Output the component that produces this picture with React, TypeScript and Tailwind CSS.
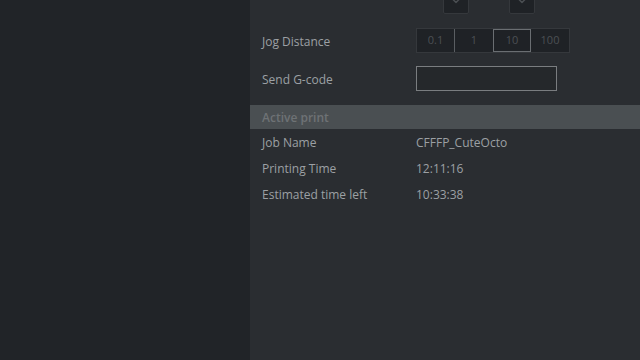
import React from "react";

function Chevron() {
  return (
    <svg width="12" height="12" viewBox="0 0 24 24" fill="none" stroke="#4a4e52" strokeWidth="3" strokeLinecap="round" strokeLinejoin="round">
      <path d="M6 9l6 6 6-6" />
    </svg>
  );
}

export default function App() {
  const font = { fontFamily: '"Open Sans", "Noto Sans", sans-serif' };
  const rows = [
    ["Job Name", "CFFFP_CuteOcto"],
    ["Printing Time", "12:11:16"],
    ["Estimated time left", "10:33:38"],
  ];
  return (
    <div className="flex h-[360px] w-[640px] overflow-hidden text-[12px] text-[#9ca0a4]" style={font}>
      <div className="w-[250px] shrink-0 bg-[#212428]" />
      <div className="flex flex-1 flex-col bg-[#2a2d31]">
        <div className="-mt-[12px] flex h-[26px] pl-[193px]">
          <div className="flex h-[26px] w-[26px] items-center justify-center rounded-[2px] border border-[#35383c] bg-[#1f2226]">
            <Chevron />
          </div>
          <div className="ml-[40px] flex h-[26px] w-[26px] items-center justify-center rounded-[2px] border border-[#35383c] bg-[#1f2226]">
            <Chevron />
          </div>
        </div>
        <div className="mt-[14px] flex h-[25px] items-center pl-[12px]">
          <div className="w-[154px] pt-[2px]">Jog Distance</div>
          <div className="flex h-[25px] border border-[#35383c] bg-[#1f2226] text-[11px] text-[#4c5054]">
            <div className="flex w-[38px] items-center justify-center border-r border-[#5a5e62]">0.1</div>
            <div className="flex w-[38px] items-center justify-center">1</div>
            <div className="flex w-[38px] items-center justify-center border border-[#6a6e72]">10</div>
            <div className="flex w-[38px] items-center justify-center">100</div>
          </div>
        </div>
        <div className="mt-[13px] flex h-[25px] items-center pl-[12px]">
          <div className="w-[154px] pt-[3px]">Send G-code</div>
          <div className="h-[25px] w-[141px] border border-[#7a7d80] bg-[#25282b]" />
        </div>
        <div className="mt-[14px] flex h-[24px] items-center bg-[#4a4f52] pl-[12px] pt-[1px] font-semibold text-[#6e7275]">
          Active print
        </div>
        <div className="mt-[1px] flex flex-col">
          {rows.map(([k, v]) => (
            <div key={k} className="flex h-[26px] items-center pl-[12px]">
              <div className="w-[154px]">{k}</div>
              <div>{v}</div>
            </div>
          ))}
        </div>
      </div>
    </div>
  );
}
